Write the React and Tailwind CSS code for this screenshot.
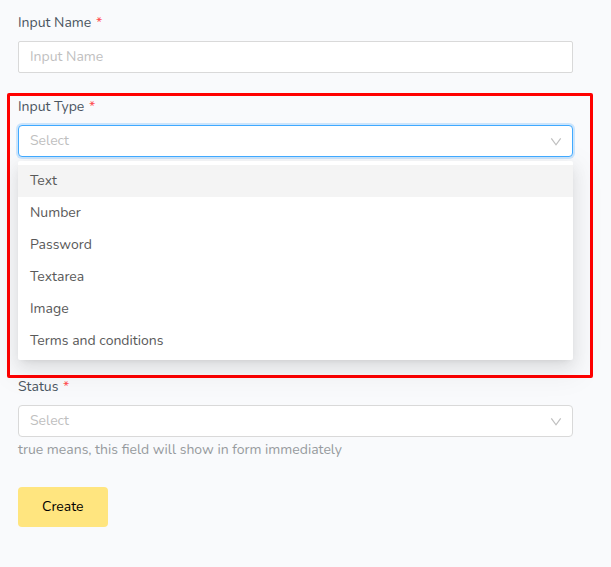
import { useState } from "react";

const TYPES = ["Text", "Number", "Password", "Textarea", "Image", "Terms and conditions"];

function Label({ htmlFor, children }) {
  return (
    <label htmlFor={htmlFor} className="mb-[9px] block leading-[18px] text-[#4a5560]">
      {children} <span className="ml-px text-[#ff4d4f]">*</span>
    </label>
  );
}

function Select({ id, options, active, value, onChange }) {
  return (
    <div className="grid items-center">
      <select
        id={id}
        value={value}
        onChange={(e) => onChange(e.target.value)}
        className={
          "col-start-1 row-start-1 h-8 w-full appearance-none rounded border bg-white px-[11px] pb-[2px] text-[#bfbfbf] outline-none " +
          (active ? "border-[#40a9ff] shadow-[0_0_0_2px_rgba(24,144,255,0.2)]" : "border-[#d9d9d9]")
        }
      >
        <option value="">Select</option>
        {options.map((o) => (
          <option key={o} value={o}>
            {o}
          </option>
        ))}
      </select>
      <svg
        viewBox="0 0 12 12"
        className="pointer-events-none col-start-1 row-start-1 mr-[11px] size-3 justify-self-end"
        fill="none"
        stroke="#bfbfbf"
        strokeWidth="1.2"
        aria-hidden="true"
      >
        <path d="M1.3 3.3 6 9.8 10.7 3.3" />
      </svg>
    </div>
  );
}

export default function App() {
  const [name, setName] = useState("");
  const [type, setType] = useState("");
  const [status, setStatus] = useState("");
  return (
    <form
      onSubmit={(e) => e.preventDefault()}
      className="min-h-screen bg-[#f9fafc] pt-[14px] pr-[18px] pb-10 pl-[7px] font-[Nunito,Lato,sans-serif] text-[14px]"
    >
      <div className="mr-5 ml-[11px]">
        <Label htmlFor="name">Input Name</Label>
        <input
          id="name"
          type="text"
          placeholder="Input Name"
          value={name}
          onChange={(e) => setName(e.target.value)}
          className="block h-8 w-full rounded-[2px] border border-[#d9d9d9] bg-white px-[11px] pb-[2px] text-[#595959] outline-none placeholder:text-[#bfbfbf]"
        />
      </div>

      <section className="mt-5 rounded-[2px] border-[3px] border-[#ff0000] pt-[2px] pr-[17px] pb-[15px] pl-2">
        <Label htmlFor="type">Input Type</Label>
        <Select id="type" options={TYPES} active value={type} onChange={setType} />
        <ul
          role="listbox"
          aria-label="Input Type"
          className="mt-1 rounded-[2px] bg-white pt-1 pb-[3px] text-[#595959] shadow-[0_3px_6px_-4px_rgba(0,0,0,0.12),0_6px_16px_0_rgba(0,0,0,0.08),0_9px_28px_8px_rgba(0,0,0,0.05)]"
        >
          {TYPES.map((t, i) => (
            <li
              key={t}
              role="option"
              aria-selected={type === t}
              onClick={() => setType(t)}
              className={"px-3 leading-8 " + (i === 0 ? "bg-[#f4f4f4]" : "")}
            >
              {t}
            </li>
          ))}
        </ul>
      </section>

      <div className="mr-5 ml-[11px]">
        <Label htmlFor="status">Status</Label>
        <Select id="status" options={["true", "false"]} value={status} onChange={setStatus} />
        <p className="mt-[2px] leading-[22px] text-[#979a9e]">
          true means, this field will show in form immediately
        </p>
        <button type="submit" className="mt-[26px] h-10 rounded bg-[#ffe57f] px-6 pb-[2px] text-black">
          Create
        </button>
      </div>
    </form>
  );
}
